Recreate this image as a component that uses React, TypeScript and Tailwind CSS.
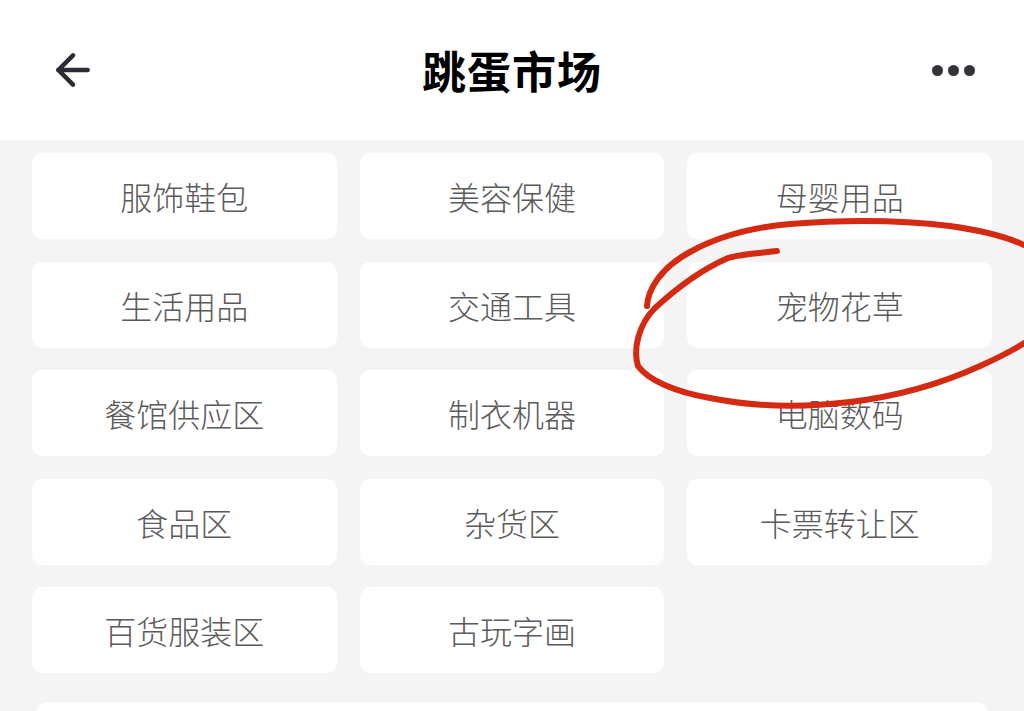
import { ArrowLeft } from "lucide-react";

const categories = [
  "服饰鞋包",
  "美容保健",
  "母婴用品",
  "生活用品",
  "交通工具",
  "宠物花草",
  "餐馆供应区",
  "制衣机器",
  "电脑数码",
  "食品区",
  "杂货区",
  "卡票转让区",
  "百货服装区",
  "古玩字画",
];

export default function App() {
  return (
    <div
      className="relative w-[1024px] h-[711px] overflow-hidden bg-[#f4f4f4]"
      style={{ fontFamily: '"Noto Sans CJK SC", "Noto Sans", sans-serif' }}
    >
      <header className="h-[140px] bg-white flex items-center justify-between px-[48px]">
        <button className="w-[50px] h-[50px] flex items-center justify-start text-[#2b2b33]">
          <ArrowLeft size={50} strokeWidth={2.2} />
        </button>
        <h1 className="text-[44px] font-bold text-black leading-none tracking-[1px]">跳蛋市场</h1>
        <div className="w-[50px] flex items-center justify-end gap-[5px] pr-[1px]">
          <span className="w-[11px] h-[11px] rounded-full bg-[#33333a]" />
          <span className="w-[11px] h-[11px] rounded-full bg-[#33333a]" />
          <span className="w-[11px] h-[11px] rounded-full bg-[#33333a]" />
        </div>
      </header>

      <div className="px-[32px] pt-[13px] grid grid-cols-3 gap-x-[23px] gap-y-[22.5px]">
        {categories.map((name) => (
          <div
            key={name}
            className="h-[86px] bg-white rounded-[10px] flex items-center justify-center text-[32px] font-light text-[#5a5a5a] leading-none"
          >
            {name}
          </div>
        ))}
      </div>

      <div className="mx-[36px] mt-[29px] h-[80px] bg-white rounded-[12px]" />

      {/* hand drawn red circle */}
      <svg
        className="absolute left-0 top-0 pointer-events-none"
        width="1024"
        height="711"
        viewBox="0 0 1024 711"
        fill="none"
      >
        <path
          d="M647 306 C648 290 660 268 690 252 C715 238 745 228 790 224 C840 220 900 220 950 226 C985 231 1010 238 1026 246"
          stroke="#d42a12"
          strokeWidth="6"
          strokeLinecap="round"
        />
        <path
          d="M777 251 C760 253 740 254 728 258 C705 268 680 285 655 308 C638 325 633 350 638 366 C648 380 675 392 710 398 C750 406 800 408 850 402 C900 396 945 382 980 366 C1000 357 1015 349 1026 342"
          stroke="#d42a12"
          strokeWidth="6"
          strokeLinecap="round"
        />
      </svg>
    </div>
  );
}
